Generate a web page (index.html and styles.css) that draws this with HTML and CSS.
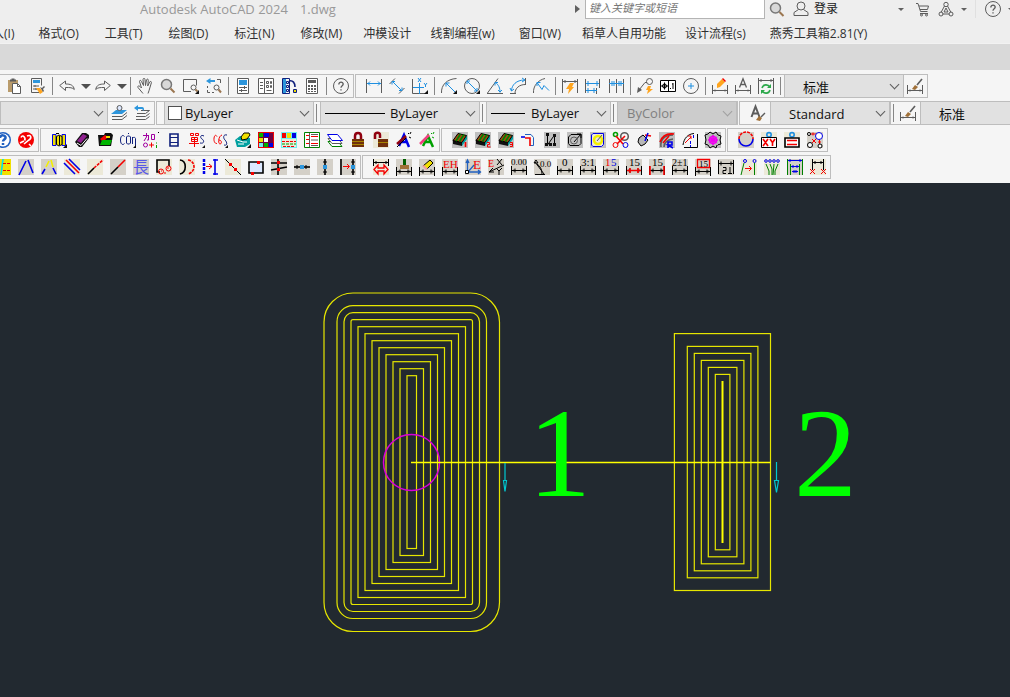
FILE: index.html
```html
<!DOCTYPE html>
<html lang="zh-CN">
<head>
<meta charset="utf-8">
<title>Autodesk AutoCAD 2024 - 1.dwg</title>
<link rel="stylesheet" href="styles.css">
</head>
<body>
<svg class="defs" aria-hidden="true">
  <symbol id="dim" viewBox="0 0 16 16"><path d="M.5 7v9M15.5 7v9M1 11.5h14M4 9.5v4M3 10.5v2M12 9.5v4M13 10.5v2"/></symbol>
  <symbol id="gdim" viewBox="0 0 16 16"><path d="M.5 7v9M15.5 7v9M1 12.5h14M3 11.5v2M13 11.5v2"/></symbol>
  <symbol id="bricks" viewBox="0 0 16 16"><path class="fk" d="M1 8l9 2v4l-9-2z"/><path class="fteal" d="M10 10l5-7v4l-5 7z"/><path class="fbrown k" d="M1 8.500l5-7 8.500 2-4.500 7z"/><path class="gn wide" d="M4 9l4.500-7M7.500 9.500L12 2.500"/></symbol>
</svg>

<header class="title-bar">
  <h1 class="app-title"><span>Autodesk AutoCAD 2024</span><span>1.dwg</span></h1>
  <div class="search">
    <span class="search-arrow"></span>
    <input class="search-box" type="text" placeholder="键入关键字或短语" aria-label="搜索">
    <button class="bar-button" aria-label="查找"><svg viewBox="0 0 16 16"><circle class="lens" cx="6.500" cy="7" r="5"/><path class="handle" d="M10.500 11l4 4"/></svg></button>
  </div>
  <button class="sign-in"><svg viewBox="0 0 16 16"><circle cx="8" cy="5" r="4"/><path d="M5.500 8.500L1 11.500v3h14v-3l-4.500-3"/></svg>登录</button>
  <div class="account">
    <button class="caret" aria-label="登录选项"></button>
    <button class="bar-button" aria-label="应用商店"><svg viewBox="0 0 16 16"><path d="M2 2.500h2l2.500 8h7M5 5h9.500l-1 3.500H6M6 12.500h8"/><circle cx="7.500" cy="14" r="1"/><circle cx="12.500" cy="14" r="1"/></svg></button>
    <button class="bar-button" aria-label="Autodesk App"><svg viewBox="0 0 16 16"><path d="M6.500 5L3 11.500M9.500 5L13 11.500M4.500 13h7M6 11l2-4 2 4z"/><circle cx="8" cy="3.500" r="2.200"/><circle cx="3" cy="13" r="2"/><circle cx="13" cy="13" r="2"/></svg></button>
    <button class="caret" aria-label="应用选项"></button>
    <span class="bar-rule"></span>
    <button class="bar-button" aria-label="帮助"><svg viewBox="0 0 16 16"><circle cx="8" cy="8" r="7.500"/><path class="bold" d="M5.800 6.500c0-3.300 4.600-3 4.400-.3C10 7.700 8 7.800 8 9.800M8 11.300v1.300"/></svg></button>
    <button class="caret" aria-label="帮助选项"></button>
  </div>
</header>

<nav class="menu-bar">
  <a href="#insert" class="close">入(I)</a><a href="#format">格式(O)</a><a href="#tools">工具(T)</a><a href="#draw">绘图(D)</a><a href="#dimension">标注(N)</a><a href="#modify" class="tight">修改(M)</a><a href="#die" class="snug">冲模设计</a><a href="#wire" class="close">线割编程(w)</a><a href="#window" class="tight">窗口(W)</a><a href="#custom" class="snug">稻草人自用功能</a><a href="#flow" class="close">设计流程(s)</a><a href="#yanxiu">燕秀工具箱2.81(Y)</a>
</nav>
<div class="ribbon-strip"></div>

<div class="toolbars">
  <div class="toolbar-row">
    <div class="toolbar first">
      <button class="tool" aria-label="粘贴"><svg viewBox="0 0 16 16"><path class="ftan" d="M1 2h10v3H7v9H1z"/><path class="fdark" d="M3 1.500h1.500v-1h3v1H9v2H3z"/><path class="fw s" d="M5.500 5.500h5l3 3v7h-8z"/><path d="M10.500 5.500v3h3"/></svg></button>
      <button class="tool" aria-label="特性匹配"><svg viewBox="0 0 16 16"><path d="M9 14.500H1.500V.500h10v7"/><path class="fb" d="M3 2h7v3H3z"/><path d="M3 8h6M3 11h4M5 7v2M6 10v2"/><path class="forange" d="M6 10l4 0 3 4-3 2z"/><path class="fdark" d="M10 9l2 1 2-2 1 1-2 2 1 2-1 1z"/></svg></button>
      <span class="rule"></span>
      <button class="tool" aria-label="放弃"><svg viewBox="0 0 16 16"><path d="M6.500 3v3c5 0 8 1 8.800 5.500C13.500 9.500 11 9.500 6.500 9.500v3L.700 7.500z"/></svg></button>
      <button class="drop" aria-label="放弃列表"></button>
      <button class="tool" aria-label="重做"><svg viewBox="0 0 16 16"><path d="M9.500 3v3c-5 0-8 1-8.800 5.500C2.500 9.500 5 9.500 9.500 9.500v3l5.800-5z"/></svg></button>
      <button class="drop" aria-label="重做列表"></button>
      <span class="rule"></span>
      <button class="tool" aria-label="平移"><svg viewBox="0 0 16 16"><path d="M6 15.500L1 9.500c-1-1.500 1-2 2-1l1.500 1.500-2-6.500c0-1.500 1.500-1.500 2 0L6.500 7.500 6 1.500c0-1.500 2-1.500 2 0l.5 6 1-5.500c.5-1.500 2-1 1.800.3l-.6 5.700 2-4c.6-1.200 2-.5 1.700.7l-2.400 8-1 2.800"/></svg></button>
      <button class="tool" aria-label="实时缩放"><svg viewBox="0 0 16 16"><circle class="lens" cx="6.500" cy="6.500" r="5"/><path class="handle" d="M10.500 10.500l4 4"/></svg></button>
      <button class="tool" aria-label="窗口缩放"><svg viewBox="0 0 16 16"><path d="M8 13.500H.500v-12h13v6"/><circle cx="10.500" cy="9.500" r="2.500"/><path class="handle" d="M12.500 11.500l2 2"/><path class="fk" d="M16 12v4h-4z"/></svg></button>
      <button class="tool" aria-label="缩放上一个"><svg viewBox="0 0 16 16"><path class="fb" d="M0 3l4.500-3v2H9v2H4.500v2z"/><path d="M11 1.500h3.500V5M1.500 8v2M1.500 12v2.500H4M6 14.500h2"/><circle cx="10.500" cy="9.500" r="2.500"/><path class="handle" d="M12.500 11.500l2.500 3"/></svg></button>
      <span class="rule"></span>
      <button class="tool" aria-label="特性"><svg viewBox="0 0 16 16"><path class="fw s" d="M2.500.500h11v15h-11z"/><path class="fb" d="M4 2h8v5H4z"/><path d="M4 9.500h8M4 12.500h8M9.500 8v3M6.500 11v3"/></svg></button>
      <button class="tool" aria-label="设计中心"><svg viewBox="0 0 16 16"><path class="fw s" d="M.500.500h15v15H.500zM6.500.500v15"/><path d="M2 4.500h3M2 7.500h3M2 10.500h3M8.500 3.500h2v2h-2zM12.500 3.500h1v2h-1zM8.500 7.500h2v2h-2zM12.500 7.500h1v2h-1zM8.500 12.500h5"/></svg></button>
      <button class="tool" aria-label="工具选项板"><svg viewBox="0 0 16 16"><path class="navy" d="M1.500.500h7v15h-7z"/><path class="fb" d="M2 1h3v14H2z"/><path class="navy" d="M5.500 3.500h2v2h-2zM5.500 7.500h2v2h-2zM5.500 11.500h2v2h-2z"/><path class="navy wide" d="M8 3c4-1 6 2 6 6"/><path class="fyel navy" d="M12.500 11.500h3v3h-3z"/></svg></button>
      <button class="tool" aria-label="快速计算器"><svg viewBox="0 0 16 16"><path class="fw s" d="M2.500.500h11v15h-11z"/><path class="fdark" d="M4 2h8v3H4zM4 7h2v2H4zM7 7h2v2H7zM10 7h2v2h-2zM4 10h2v2H4zM7 10h2v2H7zM10 10h2v2h-2zM4 13h2v1H4zM7 13h2v1H7zM10 13h2v1h-2z"/></svg></button>
      <span class="rule"></span>
      <button class="tool" aria-label="帮助"><svg viewBox="0 0 16 16"><circle cx="8" cy="8" r="7.500"/><path class="bold" d="M5.800 6.500c0-3.300 4.600-3 4.400-.3C10 7.700 8 7.800 8 9.800M8 11.300v1.300"/></svg></button>
    </div>
    <div class="toolbar">
      <span class="grip"></span>
      <button class="tool" aria-label="线性"><svg viewBox="0 0 16 16"><path d="M.500 1v14M15.500 1v14"/><path class="b" d="M1 5.500h14M4 3.500l-2 2 2 2M12 3.500l2 2-2 2"/></svg></button>
      <button class="tool" aria-label="对齐"><svg viewBox="0 0 16 16"><path d="M.500 6L6 .500M10 15.500l5.500-5.500"/><path class="b" d="M3.500 3.500l9 9M3 6.500v-3h3M13 9.500v3h-3"/></svg></button>
      <button class="tool" aria-label="坐标"><svg viewBox="0 0 16 16"><path d="M.500 1v14.500H13"/><path class="b" d="M7.500 5v11M1 9.500h11M6 0l3 4M9 0L6 4M12 5l1.500 2L15 5M13.500 7v2"/><path class="fk" d="M16 12v4h-4z"/></svg></button>
      <span class="rule"></span>
      <button class="tool" aria-label="半径"><svg viewBox="0 0 16 16"><path d="M.500 15C0 7 6 1 15.500.500"/><path class="b" d="M5 5l9 9M5 8.500V5h3.500"/><path class="fk" d="M16 12v4h-4z"/></svg></button>
      <button class="tool" aria-label="直径"><svg viewBox="0 0 16 16"><circle cx="8" cy="8" r="7.500"/><path class="b" d="M3 3l10 10M3 6V3h3M13 10v3h-3"/><path class="fk" d="M16 12v4h-4z"/></svg></button>
      <button class="tool" aria-label="角度"><svg viewBox="0 0 16 16"><path d="M0 15.500h16M.500 15L11 .500"/><path class="b" d="M8 4.500c4 2 5 6 5 10M11 12l2 2 2-2M8 7.500v-3h3"/></svg></button>
      <button class="tool" aria-label="弧长"><svg viewBox="0 0 16 16"><path d="M5 15.500c0-5 4-9 10.500-9M0 15.500h6M15.500 0v7"/><path class="b" d="M1.500 13c0-6 5-11 13-11M0 10l1.500 3L4 11M12 0l3 2-3 2"/></svg></button>
      <button class="tool" aria-label="折弯"><svg viewBox="0 0 16 16"><path d="M.500 15C0 8 5 2 12 .500"/><path class="b" d="M4 4.500l5 7 2-4 5 5M4 8V4.500h3.500"/></svg></button>
      <span class="rule"></span>
      <button class="tool" aria-label="快速标注"><svg viewBox="0 0 16 16"><path d="M.500 1v14M15.500 1v14M1 3.500h14M3 2v3M13 2v3"/><path class="forange" d="M8 5h4l-2 4h2l-6 7 1-5H4z"/></svg></button>
      <button class="tool" aria-label="基线"><svg viewBox="0 0 16 16"><path d="M.500 1v14M11.500 10v6M14.500 1v9"/><path class="b" d="M1 5.500h13M1 12.500h11M12 3v5M3 3v5M9 10v5M3 10v5"/></svg></button>
      <button class="tool" aria-label="连续"><svg viewBox="0 0 16 16"><path d="M1.500 1v14M8.500 1v14M15.500 1v14"/><path class="b" d="M1 5.500h15M4 3v5M6 3v5M11 3v5M13 3v5"/></svg></button>
      <span class="rule"></span>
      <button class="tool" aria-label="快速引线"><svg viewBox="0 0 16 16"><circle cx="12.500" cy="3.500" r="3"/><path d="M10 4.500H8L2 12"/><path class="fdark" d="M0 15l1-6 4 3z"/><path class="forange" d="M11 8h3l-1 3h3l-6 5 1-4H9z"/></svg></button>
      <button class="tool" aria-label="公差"><svg viewBox="0 0 16 16"><path class="fw k" d="M.500 2.500h15v11H.500zM8.500 2.500v11"/><path class="k" d="M1 8h7M4.500 4.500v7M13 5v6M12 6h1M10.500 10v1"/><circle class="k" cx="4.500" cy="8" r="2"/></svg></button>
      <button class="tool" aria-label="圆心标记"><svg viewBox="0 0 16 16"><circle cx="8" cy="8" r="7.500"/><path class="b" d="M5 8h6M8 5v6"/></svg></button>
      <span class="rule"></span>
      <button class="tool" aria-label="编辑标注"><svg viewBox="0 0 16 16"><use href="#gdim"/><path class="forange" d="M5 6l5-5 3 3-5 5-3 1z"/><path class="fr" d="M10 1l1-1 3 3-1 1z"/></svg></button>
      <button class="tool" aria-label="编辑标注文字"><svg viewBox="0 0 16 16"><use href="#gdim"/><path class="bold" d="M4.500 9.500L8 .800l3.500 8.700M6 6.500h4"/></svg></button>
      <button class="tool" aria-label="标注更新"><svg viewBox="0 0 16 16"><path d="M.500 0v16M15.500 0v16M1 2.500h14M3 1v3M13 1v3"/><path class="leaf wide" d="M4 10c1-4 6-4 8-1M12 12c-1 4-6 4-8 1"/><path class="fleaf" d="M13 6v4H9zM3 16v-4h4z"/></svg></button>
      <span class="rule"></span>
      <label class="combo dimstyle"><select class="inset" aria-label="标注样式"><option>标准</option></select></label>
      <button class="tool" aria-label="标注样式管理"><svg viewBox="0 0 16 16"><use href="#gdim"/><path class="fbrush" d="M5 11l3-4 3 2-3 3z"/><path class="wide" d="M10 7l5-6"/></svg></button>
    </div>
  </div>

  <div class="toolbar-row">
    <div class="toolbar first flush">
      <label class="combo layer"><select aria-label="图层"><option></option></select></label>
      <button class="tool" aria-label="图层置为当前"><svg viewBox="0 0 16 16"><path class="fb" d="M5 5h11l-5 4H0z"/><circle class="fpale s" cx="8.500" cy="3" r="2.500"/><path d="M1 11.500h10l5-4M1 14.500h10l5-4"/></svg></button>
      <button class="tool" aria-label="上一个图层"><svg viewBox="0 0 16 16"><path d="M7 5.500h8.500l-4 3H3M2 11.500h9.500l4-3M2 14.500h9.500l4-3"/><path class="fb" d="M0 3l4-3v2h4c2 0 2 1 2 4L8 4H4v2z"/></svg></button>
    </div>
    <div class="toolbar">
      <span class="grip"></span>
      <label class="combo color"><i class="swatch"></i><select class="swatched" aria-label="颜色"><option>ByLayer</option></select></label>
      <span class="rule"></span>
      <label class="combo linetype"><i class="line long"></i><select class="lined" aria-label="线型"><option>ByLayer</option></select></label>
      <span class="rule"></span>
      <label class="combo weight"><i class="line"></i><select class="weighted" aria-label="线宽"><option>ByLayer</option></select></label>
      <span class="rule"></span>
      <label class="combo plot"><select disabled aria-label="打印样式"><option>ByColor</option></select></label>
    </div>
    <div class="toolbar">
      <span class="grip"></span>
      <button class="tool" aria-label="文字样式管理"><svg viewBox="0 0 16 16"><path class="heavy-a" d="M1.500 12L5.500 1.500l4 10.500M3 8.500h5"/><path class="fbrush" d="M6 15l3-4 3 2-2 3z"/><path class="bold" d="M11 12l4-4"/></svg></button>
      <label class="combo textstyle"><select class="inset" aria-label="文字样式"><option>Standard</option></select></label>
    </div>
    <div class="toolbar last">
      <span class="rule"></span>
      <button class="tool" aria-label="标注样式"><svg viewBox="0 0 16 16"><use href="#gdim"/><path class="fbrush" d="M5 11l3-4 3 2-3 3z"/><path class="wide" d="M10 7l5-6"/></svg></button>
      <label class="combo rest"><select class="inset" aria-label="当前标注样式"><option>标准</option></select></label>
    </div>
  </div>

  <div class="toolbar-row">
    <div class="toolbar cut">
      <button class="tool" aria-label="帮助主题"><svg viewBox="0 0 16 16"><circle class="fblue" cx="8" cy="8" r="8"/><circle class="fw" cx="8" cy="8" r="6.500"/><path class="blue2 heavy" d="M5 6c0-4 6-3 5.500 0-.5 1.500-2.500 1.500-2.500 3.500M8 11v2"/></svg></button>
      <button class="tool" aria-label="关于"><svg viewBox="0 0 16 16"><circle class="fr" cx="8" cy="8" r="8"/><path class="w wide" d="M3 5.500c2-4 5 1 3.500 3M9 4c4-2 5 2 2 4L6 12M11 12l2 2M2 11l4-2"/></svg></button>
    </div>
    <div class="toolbar">
      <span class="grip"></span>
      <button class="tool" aria-label="图库"><svg viewBox="0 0 16 16"><path class="fyel n" d="M1.500 2.500H5v11H1.500zM11 2.500h3.500v11H11z"/><path class="fyel k" d="M5.500 4.500L8 3l3 1.500v8L8 14l-2.500-1.500z"/><path class="k" d="M8.500 4v9M5 1.500h3"/><path class="fk" d="M16 12v4h-4z"/></svg></button>
      <button class="tool" aria-label="删除"><svg viewBox="0 0 16 16"><path class="fk" d="M1 10L8 1h4l3 2v3l-7 9H5z"/><path class="fpurple" d="M3 9l6-7 4 2-6 7z"/><path class="w" d="M3 11l4 2.500 6-7"/></svg></button>
      <button class="tool" aria-label="打开"><svg viewBox="0 0 16 16"><path class="fk" d="M1 3h6l1-2h6l2 2-2 11H2z"/><path class="fr" d="M3 7l5-4 3 2-5 5z"/><path class="fg" d="M5 8h10l-2 5H3z"/><path class="fyel" d="M9 4h4v2H9z"/></svg></button>
      <button class="tool" aria-label="复制对象"><svg viewBox="0 0 16 16"><path class="navy" d="M4.500 4.500C3 2.500.500 3.500.500 8s2.500 5.500 4 3.500M6.500 5v6l1 1h2l1-1V5l-1-1h-2zM8.500 1v1M12.500 12V5M12.500 6.500c1-2 3-1 3 0V14"/><path class="fk" d="M16 13v3h-3z"/></svg></button>
      <button class="tool" aria-label="加图元"><svg viewBox="0 0 16 16"><path class="pl" d="M0 3.500h6M3.500 1v4L1 9M5.500 4v4H4M8.500 2.500h3v5h-3z"/><circle class="pl" cx="2.500" cy="13" r="2"/><path class="r" d="M6 13h5M8.500 10.500v5"/><path class="g" d="M13 11h1M13.500 13v3"/><path class="k" d="M15.500 0v1"/></svg></button>
      <button class="tool" aria-label="列表"><svg viewBox="0 0 16 16"><path class="navy wide" d="M4 2h8v12H4z"/><path class="navy" d="M4 5.500h8M4 10.500h8"/></svg></button>
      <button class="tool" aria-label="单体"><svg viewBox="0 0 16 16"><path class="r" d="M1.500 1.500h3v2h-3zM6.500 1.500h3v2h-3zM2.500 5.500h6v4h-6zM2 7.500h7M0 11.500h10M5.500 5v10"/><path class="navy" d="M15 4c-4-2-4 2-2 3s3 5-2 4"/><path class="fk" d="M16 13v3h-3z"/></svg></button>
      <button class="tool" aria-label="改图元"><svg viewBox="0 0 16 16"><path class="r" d="M5 4.500C2-.500 0 12 5 11.500M10 3C6 4 6 12 8 12s2-4-1-4"/><path class="navy" d="M15 3c-4-1-4 3-2 5s3 6-1 5"/><path class="fk" d="M16 13v3h-3z"/></svg></button>
      <button class="tool" aria-label="图层库"><svg viewBox="0 0 16 16"><path class="fteal" d="M0 8l5-4 10 2v6l-5 3H2z"/><path class="fyel k" d="M6 5l3-4h5l1 2-3 4-5 1z"/><path class="w" d="M2 8l6 2h4M3 12h6"/><path class="fk" d="M16 12v4h-4z"/></svg></button>
      <button class="tool" aria-label="色块"><svg viewBox="0 0 16 16"><path class="fmaroon" d="M0 0h16v16H0z"/><path class="fg" d="M1 1h4v4H1z"/><path class="fn" d="M6 1h5v4H6zM11 11h4v4h-4z"/><path class="fyel" d="M1 6h4v4H1z"/><path class="fw" d="M6 6h4v4H6z"/><path class="fcy" d="M1 11h4v4H1z"/><path class="fg" d="M6 11h4v4H6z"/><path class="r" d="M.500.500h15v15H.500z"/></svg></button>
      <button class="tool" aria-label="图层颜色"><svg viewBox="0 0 16 16"><path class="fcy" d="M0 0h16v16H0z"/><path class="fr" d="M1 1h4v5H1z"/><path class="fyel" d="M6 1h4v5H6z"/><path class="fn" d="M11 1h4v5h-4z"/><path class="fcream" d="M1 7h14v8H1z"/><path class="r dash" d="M1 9.500h14M2 14.500h12"/><path class="g dash" d="M1 12h14"/></svg></button>
      <button class="tool" aria-label="图层列表"><svg viewBox="0 0 16 16"><path class="fw gn" d="M.500.500h15v15H.500z"/><path class="r" d="M2 3.500h3M2 7.500h3M2 11.500h3M7 4.500h7M7 11.500h7"/><path class="s" d="M5.500 1v14M7 8h7M7 2.500h7M7 13.500h7"/></svg></button>
      <button class="tool" aria-label="图层"><svg viewBox="0 0 16 16"><path class="fw gn" d="M1 9.500h10l4 5H5z"/><path class="fw s" d="M1 6.500h10l4 5H5z"/><path class="fw n" d="M.500 2.500h10l5 6H5z"/></svg></button>
      <button class="tool" aria-label="锁定"><svg viewBox="0 0 16 16"><path class="maroon heavy" d="M5 7V4c0-4 6-4 6 0v3"/><path class="flock" d="M2 7h12v8H2z"/><path class="yd" d="M2 9.500h12M2 12.500h12"/></svg></button>
      <button class="tool cream" aria-label="解锁"><svg viewBox="0 0 16 16"><path class="maroon heavy" d="M2 7V3c0-3 5-3 5 0v3"/><path class="flock" d="M5 7h10v8H5z"/><path class="yd" d="M5 10.500h10"/></svg></button>
      <button class="tool" aria-label="文字工具"><svg viewBox="0 0 16 16"><path class="n heavy" d="M3 14L8 3l5 12M5 10h6"/><path class="maroon heavy" d="M1 12l9-8"/><path class="k" d="M1 15l9-9M12 1l1 1M15 0l-1 2M13 5l2 1"/></svg></button>
      <button class="tool" aria-label="文字格式"><svg viewBox="0 0 16 16"><path class="g heavy" d="M4 14L9 4l5 11M5 10h7"/><path class="pink heavy" d="M1 12l9-9"/><path class="g" d="M12 1l1 1M15 0l-1 2M13 5l2 1"/></svg></button>
    </div>
    <div class="toolbar">
      <span class="grip"></span>
      <button class="tool silver" aria-label="模板一"><svg viewBox="0 0 16 16"><use href="#bricks"/><path class="r wide" d="M13.500 10v5"/></svg></button>
      <button class="tool silver" aria-label="模板二"><svg viewBox="0 0 16 16"><use href="#bricks"/><path class="r" d="M12 10.500h2.500v2H12.500v2.500h3"/></svg></button>
      <button class="tool silver" aria-label="模板三"><svg viewBox="0 0 16 16"><use href="#bricks"/><path class="r" d="M12 10.500h2.500v4H12M12 12.500h2"/></svg></button>
      <button class="tool" aria-label="折弯边"><svg viewBox="0 0 16 16"><path class="blue2" d="M4 2.500h6l2.500 3v8H9"/><path class="n wide" d="M0 5h4"/><path class="r wide" d="M4 6h5v8"/></svg></button>
      <button class="tool silver" aria-label="节点"><svg viewBox="0 0 16 16"><path class="k" d="M3.500 2v11M3.500 13l7-10M10.500 3v10"/><path class="fk" d="M2 1h3v3H2zM9 2h3v3H9zM1 11h3v3H1zM5 11h3v3H5zM9 11h3v3H9z"/></svg></button>
      <button class="tool silver" aria-label="圆角框"><svg viewBox="0 0 16 16"><path class="k" d="M4 2.500h10v9l-2 2H3l-1.500-2V5z"/><path class="k" d="M7 10l7-8M10 2h4v4"/><circle class="s" cx="7" cy="8.500" r="3.500"/></svg></button>
      <button class="tool silver" aria-label="方圆"><svg viewBox="0 0 16 16"><path class="fcream n" d="M3 1.500h10.500v11l-2 2H3L1.500 13V3z"/><circle class="y heavy" cx="8" cy="8" r="4"/><path class="s" d="M7 9l5-6"/></svg></button>
      <button class="tool" aria-label="圆阵列"><svg viewBox="0 0 16 16"><circle class="s wide" cx="11.500" cy="4.500" r="3.800"/><circle class="g wide" cx="2.500" cy="2.500" r="2"/><circle class="r" cx="2.500" cy="13" r="2.500"/><circle class="n" cx="12.500" cy="13" r="2.500"/><path class="r wide" d="M3 4l7 8M4 12l8-8"/></svg></button>
      <button class="tool" aria-label="旋转"><svg viewBox="0 0 16 16"><path class="fsilver k" d="M3 6l4-3 5 5-3 4-4 2-3-4z"/><path class="r wide" d="M9 3l6 1"/><path class="n wide" d="M12 1L9 9"/></svg></button>
      <button class="tool silver" aria-label="圆弧半径"><svg viewBox="0 0 16 16"><path class="s wide" d="M2 15C1 8 5 3 14 3M5 15c0-4 2-7 9-8"/><path class="r wide" d="M1 10C3 4 7 1 15 2M4 11l6-7"/><path class="n wide" d="M9 16v-6h4v3H9l5 3"/></svg></button>
      <button class="tool" aria-label="虚线弧"><svg viewBox="0 0 16 16"><path class="k" d="M1 13C2 6 6 2 12 1.500M15.500 2v13.500H2"/><path class="r" d="M3 11l6-6M6 4h3v3"/><path class="n dash" d="M8.500 9v6M11.500 3v4"/></svg></button>
      <button class="tool silver" aria-label="齿轮"><svg viewBox="0 0 16 16"><path class="k" d="M0 3l3-1 2-2 3 2 3-2 2 3 3 1-1 4 1 4-4 1-1 3-3-2-3 2-2-3-3-1 1-4z"/><path class="fsilver" d="M3 3h10v10H3z"/><circle class="m wide" cx="8" cy="8" r="3.500"/><path class="m wide" d="M3 8h10M8 3v10M4.500 5l7 6M11.500 5l-7 6"/></svg></button>
    </div>
    <div class="toolbar">
      <span class="grip"></span>
      <button class="tool gray" aria-label="圆"><svg viewBox="0 0 16 16"><path class="n wide" d="M1 7a7 7 0 0 0 14 0"/><path class="r wide dash" d="M1 7a7 7 0 0 1 14 0"/></svg></button>
      <button class="tool cream" aria-label="坐标XY"><svg viewBox="0 0 16 16"><circle class="b wide" cx="8" cy="2.800" r="2.200"/><path class="fw k" d="M.500 5.500h15v10H.500z"/><path class="r wide" d="M2 7l5 7M7 7l-5 7M9 7l2.500 3.500L14 7M11.500 10v4"/></svg></button>
      <button class="tool cream" aria-label="横线"><svg viewBox="0 0 16 16"><circle class="b wide" cx="8" cy="2.800" r="2.200"/><path class="fw k wide" d="M1 6h14v9H1z"/><path class="r wide" d="M3 8.500h10M3 12.500h10"/></svg></button>
      <button class="tool gray" aria-label="圆连接"><svg viewBox="0 0 16 16"><path class="r" d="M4 2h5M6 .500v3M5 11l5-5M5 7l4 4M12.500 8v4M11 10h3"/><circle class="fw k" cx="2" cy="2" r="1.500"/><circle class="fw n" cx="12" cy="4" r="3.500"/><circle class="fw k" cx="3" cy="13" r="2.500"/><circle class="fw k" cx="13" cy="14" r="2"/></svg></button>
    </div>
  </div>

  <div class="toolbar-row">
    <div class="toolbar cut">
      <button class="tool" aria-label="图层线"><svg viewBox="0 0 16 16"><path class="fyel" d="M0 0h16v16H0z"/><path class="c wide" d="M8 0L6 16"/><path class="r dash" d="M8 4.500h8M8 11.500h8"/></svg></button>
      <button class="tool gray" aria-label="折线"><svg viewBox="0 0 16 16"><path class="n wide" d="M1 16L8 2M10 1l5 13"/></svg></button>
      <button class="tool gray" aria-label="断折线"><svg viewBox="0 0 16 16"><path class="n wide" d="M1 15l3-5M12 9l3 6"/><path class="y wide" d="M5 8l3-6M10 1l2 7"/></svg></button>
      <button class="tool cream" aria-label="斜线"><svg viewBox="0 0 16 16"><path class="n wide" d="M0 4l11 11M5 0l11 11"/><path class="r wide" d="M2 1l13 13"/></svg></button>
      <button class="tool cream" aria-label="延长线"><svg viewBox="0 0 16 16"><path class="k wide" d="M1 15l6-6"/><path class="r wide dash" d="M7 9l9-8"/></svg></button>
      <button class="tool gray" aria-label="直线"><svg viewBox="0 0 16 16"><path class="r wide" d="M8 8l7-7"/><path class="k wide" d="M1 15l7-7"/></svg></button>
      <button class="tool gray" aria-label="长度"><svg viewBox="0 0 16 16"><text class="t cjk" x="0" y="14" font-size="16">長</text></svg></button>
      <button class="tool cream" aria-label="矩形圆"><svg viewBox="0 0 16 16"><path class="k wide" d="M4 13H1V1h12v6"/><circle class="r" cx="5" cy="12.500" r="2.500"/><circle class="r" cx="12.500" cy="9.500" r="2.500"/><path class="r" d="M5 12h1M12 8v2M10 14H8"/></svg></button>
      <button class="tool cream" aria-label="双弧"><svg viewBox="0 0 16 16"><path class="k wide" d="M1 1c7 1 7 12 0 14"/><path class="r wide dash" d="M9 1c8 1 8 12 0 14"/></svg></button>
      <button class="tool" aria-label="间距"><svg viewBox="0 0 16 16"><path class="n heavy dash" d="M2 0v16"/><path class="n wide" d="M13 0v16M11 1h5M11 15h5"/><path class="r" d="M4 7.500h6M7 5l3 2.500L7 10"/></svg></button>
      <button class="tool cream" aria-label="打断"><svg viewBox="0 0 16 16"><path class="k" d="M0 0l16 16"/><path class="fr" d="M4 4h3v3H4zM9 9h3v3H9z"/></svg></button>
      <button class="tool" aria-label="矩形"><svg viewBox="0 0 16 16"><path class="fpale k wide" d="M1 3h14v11H1z"/><path class="fr" d="M9 2h3v3H9zM3 13h3v3H3z"/></svg></button>
      <button class="tool gray" aria-label="修剪"><svg viewBox="0 0 16 16"><path class="k wide" d="M0 4h16M0 11l16-3M7 16V0"/><path class="fr" d="M6 2h3v3H6zM6 9h3v3H6z"/></svg></button>
      <button class="tool gray" aria-label="横向断点"><svg viewBox="0 0 16 16"><path class="k wide" d="M0 8h16"/><path class="k" d="M3 6v4M12 6v4"/><path class="fb" d="M6 6h4v4H6z"/></svg></button>
      <button class="tool gray" aria-label="纵向断点"><svg viewBox="0 0 16 16"><path class="k wide" d="M8 0v16"/><path class="k" d="M6 3h4M6 13h4"/><path class="fb" d="M6 6h4v4H6z"/></svg></button>
      <button class="tool gray" aria-label="移动"><svg viewBox="0 0 16 16"><path class="k wide" d="M1 0v16M13 0v16"/><path class="k" d="M11 3h4M11 13h4"/><path class="r" d="M3 7.500h6M7 5l2.500 2.500L7 10"/><path class="fb" d="M11 6h4v4h-4z"/></svg></button>
    </div>
    <div class="toolbar">
      <span class="grip"></span>
      <button class="tool cream" aria-label="标注距离"><svg viewBox="0 0 16 16"><path class="k" d="M.500 0v7M15.500 0v7M1 3.500h14M3 2v3M13 2v3"/><path class="r bold" d="M1 10.500l4-4.500v3h6V6l4 4.500-4 4.500v-3H5v3z"/></svg></button>
      <button class="tool gray" aria-label="刷标注"><svg viewBox="0 0 16 16"><use class="k" href="#dim" y="1"/><path class="fbrush" d="M4 6h9v4H4z"/><path class="fgn" d="M7 0h3v6H7z"/></svg></button>
      <button class="tool gray" aria-label="擦标注"><svg viewBox="0 0 16 16"><use class="k" href="#dim" y="1"/><path class="fyel k" d="M4 7l7-6 3 3-6 6z"/><path class="fpink" d="M3 7l2-1 4 4-2 1z"/></svg></button>
      <button class="tool gray" aria-label="标注EH"><svg viewBox="0 0 16 16"><use class="k" href="#dim" y="1"/><text class="t fr" x="1" y="9" font-size="11">EH</text></svg></button>
      <button class="tool gray" aria-label="坐标E"><svg viewBox="0 0 16 16"><path class="blue2 bold" d="M2.500 2v11H15M3 13l6-7M1 4l1.500-3L4 4M13 11l2.500 2-2.500 2"/><path class="fw k" d="M.500 11.500h3v3h-3z"/><text class="t fr" x="8" y="10" font-size="13">E</text></svg></button>
      <button class="tool gray" aria-label="EXY"><svg viewBox="0 0 16 16"><text class="t fr" x="0" y="8" font-size="10">E</text><path class="k" d="M1 13L16 6M1 13l4-4M1 13h5M9 0l5 6M14 0L9 6M8 9l3 3 3-3M11 12v4"/></svg></button>
      <button class="tool gray" aria-label="小数位"><svg viewBox="0 0 16 16"><use class="k" href="#dim"/><text class="t fk2" x="0" y="6" font-size="9">0.00</text></svg></button>
      <button class="tool gray" aria-label="角度小数"><svg viewBox="0 0 16 16"><path class="k" d="M1 3l9 12M1 15.500h10M3 5C6 7 8 10 8 15M0 4l2-3 2 3z"/><text class="t fk2" x="6" y="8" font-size="9">0.0</text></svg></button>
      <button class="tool gray" aria-label="归零"><svg viewBox="0 0 16 16"><use class="k" href="#dim"/><text class="t fk2" x="5" y="7" font-size="11">0</text></svg></button>
      <button class="tool gray" aria-label="比例"><svg viewBox="0 0 16 16"><use class="k" href="#dim"/><text class="t fk2" x="1" y="7" font-size="11">3:1</text></svg></button>
      <button class="tool gray" aria-label="标注蓝"><svg viewBox="0 0 16 16"><use class="k" href="#dim"/><text class="t fr" x="2" y="7" font-size="11">1</text><text class="t fn" x="8" y="7" font-size="11">5</text></svg></button>
      <button class="tool gray" aria-label="标注线红"><svg viewBox="0 0 16 16"><use class="k" href="#dim"/><path class="r wide" d="M1 11.500h14M4 9v5M12 9v5"/><text class="t fk2" x="3" y="7" font-size="11">15</text></svg></button>
      <button class="tool gray" aria-label="界线红"><svg viewBox="0 0 16 16"><use class="k" href="#dim"/><path class="r wide" d="M1 7v9M15 7v9"/><text class="t fk2" x="3" y="7" font-size="11">15</text></svg></button>
      <button class="tool gray" aria-label="公差标注"><svg viewBox="0 0 16 16"><use class="k" href="#dim"/><text class="t fk2" x="0" y="7" font-size="10">2±1</text></svg></button>
      <button class="tool gray" aria-label="基本尺寸"><svg viewBox="0 0 16 16"><use class="k" href="#dim" y="1"/><path class="r bold" d="M2.500.500h12v8h-12z"/><text class="t fk2" x="4" y="8" font-size="9">15</text></svg></button>
      <button class="tool gray" aria-label="翻转标注"><svg viewBox="0 0 16 16"><path class="k" d="M.500 1v14M15.500 1v14M1 4.500h14M3 2.500v4M13 2.500v4M5 8.500h3v3H5v3h3M12 8v6.500M10 14.500h4"/></svg></button>
      <button class="tool cream" aria-label="标注移动"><svg viewBox="0 0 16 16"><circle class="n" cx="4" cy="2" r="1.500"/><circle class="n" cx="13.500" cy="2" r="1.500"/><path class="gn" d="M3 4L0 16M13.500 4v12"/><path class="r" d="M4 9.500h6M8 7l2.500 2.500L8 12"/></svg></button>
      <button class="tool cream" aria-label="序号"><svg viewBox="0 0 16 16"><g class="n"><circle cx="2" cy="2" r="1.300"/><circle cx="6" cy="2" r="1.300"/><circle cx="10" cy="2" r="1.300"/><circle cx="14" cy="2" r="1.300"/></g><path class="gn" d="M2 5l3 7v4M6 5l2 5v6M10 5l-1 11M14 5l-3 7v4"/></svg></button>
      <button class="tool gray" aria-label="标注对齐"><svg viewBox="0 0 16 16"><path class="gn" d="M.500 0v16M3.500 5v11M12.500 5v11M15.500 0v16"/><path class="n" d="M1 1.500h14M4 7.500h8M5 12.500h6M3 0v3M13 0v3M6 6v3M10 6v3M7 11v3M9 11v3"/></svg></button>
      <button class="tool cream" aria-label="剪标注"><svg viewBox="0 0 16 16"><path class="k" d="M2.500 0v11M13.500 0v11M3 3.500h10M5 2v3M11 2v3"/><path class="r" d="M0 10l5 5M5 10l-5 5M11 10l5 5M16 10l-5 5"/></svg></button>
    </div>
  </div>
</div>

<main class="model-space">
  <svg class="drawing" role="img" aria-label="1.dwg">
    <g class="cad-yellow">
      <rect x="324" y="110" width="175.500" height="338.500" rx="29"/>
      <rect x="337" y="122.700" width="149.500" height="312.800" rx="16"/>
      <rect x="344" y="129.700" width="135.500" height="298.800" rx="9"/>
      <rect x="351" y="136.700" width="121.500" height="284.800" rx="2"/>
      <rect x="358" y="143.700" width="107.500" height="270.800"/>
      <rect x="365" y="150.700" width="93.500" height="256.800"/>
      <rect x="372" y="157.700" width="79.500" height="242.800"/>
      <rect x="379" y="164.700" width="65.500" height="228.800"/>
      <rect x="386" y="171.700" width="51.500" height="214.800"/>
      <rect x="393" y="178.700" width="37.500" height="200.800"/>
      <rect x="400" y="185.700" width="23.500" height="186.800"/>
      <rect x="407" y="192.700" width="9.500" height="172.800"/>
      <rect x="674.400" y="150.600" width="96.100" height="256.900"/>
      <rect x="687.300" y="163.400" width="70.600" height="231.400"/>
      <rect x="694.300" y="170.400" width="56.600" height="217.400"/>
      <rect x="701.300" y="177.400" width="42.600" height="203.400"/>
      <rect x="708.300" y="184.400" width="28.600" height="189.400"/>
      <rect x="715.300" y="191.400" width="14.600" height="175.400"/>
      <path class="double" d="M722.500 198v162"/>
    </g>
    <circle class="cad-magenta" cx="411.500" cy="279.500" r="28"/>
    <path class="cad-axis" d="M411 279.400h359.500"/>
    <path class="cad-cyan" d="M505 280v18M503.500 297.500h3l-1.500 11zM776.500 279v19M774.500 297.500h4l-2 12z"/>
    <text class="cad-number" x="528" y="313">1</text>
    <text class="cad-number" x="794" y="313">2</text>
  </svg>
</main>
</body>
</html>
```
FILE: styles.css
```css
* { box-sizing: border-box; }

body {
  margin: 0;
  min-height: 100vh;
  display: flex;
  flex-direction: column;
  overflow: hidden;
  background: #eeeeee;
  color: #303030;
  font: 12px/16px "Open Sans", "Noto Sans CJK SC", sans-serif;
}

button, select, input { font: inherit; color: inherit; }

button {
  flex: none;
  margin: 0;
  padding: 0;
  border: 0;
  background: none;
}

svg {
  display: block;
  flex: none;
  width: 16px;
  height: 16px;
  fill: none;
  stroke: #5c5c5c;
  overflow: visible;
}

.defs { position: absolute; width: 0; height: 0; }

/* Title bar */
.title-bar {
  display: flex;
  align-items: center;
  height: 20px;
  padding: 0 1px 2px 140px;
  white-space: nowrap;
}

.app-title {
  display: flex;
  flex: 1;
  gap: 12px;
  margin: 0;
  color: #999999;
  font-size: 13px;
  line-height: 18px;
  font-weight: 400;
}

.search { display: flex; align-items: center; height: 20px; }

.search-arrow {
  width: 10px;
  height: 8px;
  border: solid transparent;
  border-width: 4px 0 4px 5px;
  border-left-color: #606060;
}

.search-box {
  width: 180px;
  height: 20px;
  padding: 0 3px 2px;
  border: 1px solid #b4b4b4;
  border-top: 0;
  background: #ffffff;
  font-size: 11px;
}

.search-box::placeholder { color: #777777; font-style: italic; opacity: 1; }
.bar-button { width: 24px; padding: 0 4px; }

.sign-in {
  display: flex;
  align-items: center;
  gap: 5px;
  padding-left: 4px;
  color: #202020;
}

.account { display: flex; align-items: center; margin-left: 57px; }

.caret::before, .drop::before {
  content: "";
  display: block;
  width: 0;
  margin: auto;
  border: solid transparent;
  border-width: 3px 3px 0;
  border-top-color: #606060;
}

.caret { width: 12px; height: 16px; }
.account .caret:last-child { margin-right: -8px; }
.account > .caret:first-child { margin-right: 3px; }
.bar-rule { width: 1px; height: 18px; margin: 0 5px; background: #e0e0e0; }

/* Menu */
.menu-bar {
  display: flex;
  align-items: center;
  height: 24px;
  margin-left: -8px;
  border-bottom: 1px solid #f2f2f2;
  white-space: nowrap;
}

.menu-bar a { margin-right: 26px; padding-top: 4px; color: inherit; text-decoration: none; }
.menu-bar .close { margin-right: 24px; }
.menu-bar .tight { margin-right: 21px; }
.menu-bar .snug { margin-right: 19px; }
.ribbon-strip { height: 26px; background: #d9d9d9; }

/* Toolbars */
.toolbars {
  display: flex;
  flex-direction: column;
  gap: 3px;
  padding: 4px 0;
  background: #f5f5f5;
}

.toolbar-row { display: flex; gap: 1px; height: 24px; }

.toolbar {
  display: flex;
  flex: none;
  align-items: center;
  border: 1px solid #bdbdbd;
}

.toolbar.first { border-left: 0; padding-left: 4px; }
.toolbar.flush { padding-left: 0; }
.toolbar.cut { margin-left: -9px; }
.toolbar.last { flex: 1; border-right: 0; margin-left: -2px; }
.grip { width: 7px; }
.rule { width: 6px; height: 18px; border: solid transparent; border-width: 0 3px 0 2px; background: #868686 padding-box; }
.tool { width: 23px; padding: 0 4px 0 3px; }
.tool.gray svg { background: #d4d0c8; }
.tool.silver svg { background: #c0c0c0; }
.tool.cream svg { background: #ece9d8; }
.drop { width: 13px; height: 16px; }
.drop::before { border-width: 5px 5px 0; border-top-color: #505050; }

.combo { position: relative; height: 22px; }

.combo::after {
  content: "";
  position: absolute;
  right: 6px;
  top: 6px;
  width: 6px;
  height: 6px;
  border: solid #5c5c5c;
  border-width: 0 1px 1px 0;
  transform: rotate(45deg);
}

.combo.plot::after { border-color: #a0a0a0; }

.combo select {
  display: block;
  width: 100%;
  height: 22px;
  padding: 0 20px 0 9px;
  border: 1px solid #bdbdbd;
  border-width: 0 1px;
  border-radius: 0;
  background: #e1e1e1;
  color: #101010;
  font-size: 13px;
  line-height: 20px;
  appearance: none;
  opacity: 1;
}

.combo select.inset { padding-top: 2px; padding-left: 18px; }
.combo select.swatched { padding-left: 20px; }
.combo select.lined { padding-left: 69px; }
.combo select.weighted { padding-left: 44px; }
.combo select:disabled { background: #cccccc; color: #808080; }
.dimstyle { width: 120px; }
.layer { width: 108px; }
.color { width: 150px; }
.linetype { width: 160px; }
.weight { width: 125px; }
.plot { width: 120px; }
.textstyle { width: 120px; }
.rest { flex: 1; margin-right: -20px; }
.swatch { position: absolute; left: 4px; top: 4px; width: 14px; height: 14px; border: 1px solid #505050; background: #ffffff; }
.line { position: absolute; left: 5px; top: 11px; width: 34px; height: 1px; background: #000000; }
.line.long { width: 60px; }

/* Icon fills */
.fw { fill: #ffffff; stroke: none; }
.fk { fill: #101010; stroke: none; }
.fk2 { fill: #000000; stroke: none; }
.fdark { fill: #5c5c5c; stroke: none; }
.fb { fill: #2d96dc; stroke: none; }
.fn { fill: #0000e0; stroke: none; }
.fr { fill: #f40000; stroke: none; }
.fg { fill: #00b400; stroke: none; }
.fgn { fill: #006000; stroke: none; }
.fcy { fill: #70f0f0; stroke: none; }
.fyel { fill: #f0e000; stroke: none; }
.ftan { fill: #b99b6b; stroke: none; }
.fbrush { fill: #a07038; stroke: none; }
.forange { fill: #ffa51f; stroke: none; }
.fleaf { fill: #2ba84a; stroke: none; }
.fblue { fill: #2060c0; stroke: none; }
.fteal { fill: #00a0a0; stroke: none; }
.fbrown { fill: #9c4a10; stroke: none; }
.fpurple { fill: #902090; stroke: none; }
.fmaroon { fill: #700040; stroke: none; }
.fcream { fill: #ece9d8; stroke: none; }
.fsilver { fill: #b8b8b8; stroke: none; }
.fpale { fill: #dce8ff; stroke: none; }
.fpink { fill: #f0a0a0; stroke: none; }
.flock { fill: #70300c; stroke: none; }

/* Icon strokes */
.s { stroke: #5c5c5c; }
.k { stroke: #000000; }
.w { stroke: #ffffff; }
.b { stroke: #1e8fe0; }
.n { stroke: #0000e8; }
.navy { stroke: #10207c; }
.blue2 { stroke: #2060c0; }
.r { stroke: #f40000; }
.g { stroke: #00a000; }
.gn { stroke: #008000; }
.m { stroke: #f000f0; }
.pl { stroke: #a000a0; }
.c { stroke: #00e0f0; }
.y { stroke: #f4f000; }
.yd { stroke: #a88400; }
.maroon { stroke: #900010; }
.pink { stroke: #f04080; }
.leaf { stroke: #2ba84a; }
.bold { stroke-width: 1.3; }
.wide { stroke-width: 1.6; }
.heavy-a { stroke-width: 2; }
.heavy { stroke-width: 2.5; }
.dash { stroke-dasharray: 3 1; }
.lens { fill: #d8d8d8; stroke: #777777; stroke-width: 1.5; }
.handle { stroke: #9b7650; stroke-width: 2; }
.t { stroke: none; font-family: "Liberation Serif", serif; }
.cjk { fill: #5858e8; font-family: "Noto Sans CJK TC", sans-serif; }

/* Model space */
.model-space { display: flex; flex: 1; background: #222930; }
.drawing { flex: 1; width: auto; height: auto; overflow: hidden; }
.cad-yellow { stroke: #e6e600; stroke-width: 1.2; }
.double { stroke: #ffff00; stroke-width: 2; }
.cad-axis { stroke: #ffff00; stroke-width: 1.5; }
.cad-magenta { stroke: #d800d8; stroke-width: 1.5; }
.cad-cyan { stroke: #00c8d0; stroke-width: 1.2; }
.cad-number { fill: #00ff00; stroke: none; font: 126px "Liberation Serif", serif; }
```
